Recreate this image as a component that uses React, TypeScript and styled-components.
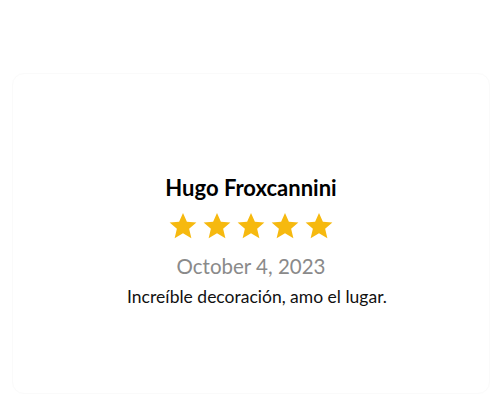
import React from "react";
import styled, { createGlobalStyle } from "styled-components";

const Global = createGlobalStyle`
  html, body { margin: 0; padding: 0; background: #ffffff; }
  body { font-family: "Open Sans", "Liberation Sans", sans-serif; }
`;

const Page = styled.div`
  width: 499px;
  height: 409px;
  box-sizing: border-box;
  padding: 73px 9px 15px 12px;
  display: flex;
`;

const Card = styled.div`
  flex: 1;
  border: 1px solid #fafafa;
  border-radius: 12px;
  display: flex;
  flex-direction: column;
  align-items: center;
  padding-top: 100px;
  box-sizing: border-box;
`;

const Name = styled.div`
  font-family: Lato, "Open Sans", sans-serif;
  font-weight: 700;
  font-size: 22px;
  line-height: 28px;
  color: #000;
`;

const Stars = styled.div`
  display: flex;
  gap: 4px;
  margin-top: 9px;
`;

const Date = styled.div`
  font-family: Lato, sans-serif;
  font-size: 20.5px;
  line-height: 24px;
  color: #8a8a8a;
  margin-top: 13px;
`;

const Text = styled.div`
  font-family: Lato, sans-serif;
  font-size: 17.5px;
  line-height: 22px;
  color: #111;
  margin-top: 8px;
  padding-left: 12px;
`;

const Star = () => (
  <svg width="30" height="30" viewBox="0 0 24 24">
    <path
      d="M12 1.5l3.1 7.1 7.6.6-5.8 5 1.8 7.5L12 17.7l-6.7 4 1.8-7.5-5.8-5 7.6-.6z"
      fill="#F6B90F"
    />
  </svg>
);

export default function App() {
  return (
    <>
      <Global />
      <Page>
        <Card>
          <Name>Hugo Froxcannini</Name>
          <Stars>
            {[0, 1, 2, 3, 4].map((i) => (
              <Star key={i} />
            ))}
          </Stars>
          <Date>October 4, 2023</Date>
          <Text>Increíble decoración, amo el lugar.</Text>
        </Card>
      </Page>
    </>
  );
}
